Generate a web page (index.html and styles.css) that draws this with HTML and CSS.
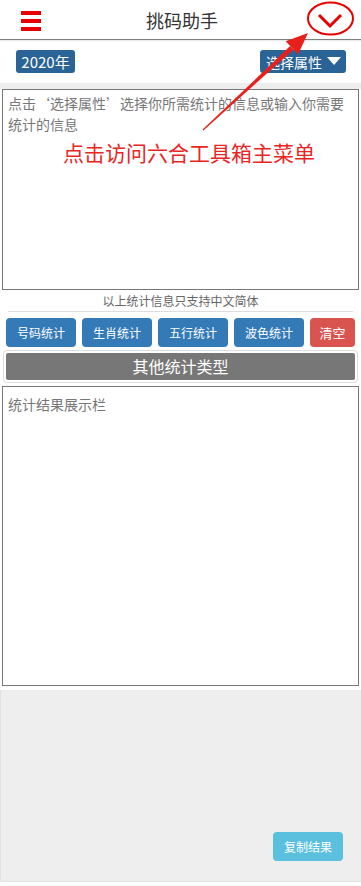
FILE: index.html
```html
<!DOCTYPE html>
<html lang="zh-CN">
<head>
<meta charset="utf-8">
<title>挑码助手</title>
<link rel="stylesheet" href="styles.css">
</head>
<body>
<div class="page">
  <header class="header">
    <span class="menu-icon"><i></i><i></i><i></i></span>
    <h1 class="title">挑码助手</h1>
    <svg class="chevron" width="30" height="20" viewBox="0 0 30 20"><path d="M4 4 L15 15 L26 4" fill="none" stroke="#e60000" stroke-width="3"/></svg>
  </header>
  <div class="toolbar">
    <span class="pill pill-year">2020年</span>
    <span class="pill pill-select">选择属性 <svg width="14" height="9" viewBox="0 0 14 9"><path d="M0 0 L14 0 L7 8 Z" fill="#fff"/></svg></span>
  </div>
  <div class="band"></div>
  <div class="input-box">
    <p class="placeholder">点击‘选择属性’选择你所需统计的信息或输入你需要统计的信息</p>
    <p class="hint">点击访问六合工具箱主菜单</p>
  </div>
  <p class="note">以上统计信息只支持中文简体</p>
  <div class="btn-row">
    <button class="btn btn-blue">号码统计</button>
    <button class="btn btn-blue">生肖统计</button>
    <button class="btn btn-blue">五行统计</button>
    <button class="btn btn-blue">波色统计</button>
    <button class="btn btn-red">清空</button>
  </div>
  <div class="other-wrap"><div class="other">其他统计类型</div></div>
  <div class="result-box"><p class="placeholder">统计结果展示栏</p></div>
  <div class="footer">
    <button class="btn btn-copy">复制结果</button>
  </div>
  <svg class="annot" width="361" height="180" viewBox="0 0 361 180">
    <ellipse cx="330.5" cy="18.5" rx="22.5" ry="16" fill="none" stroke="#e60000" stroke-width="2"/>
    <polygon points="202.6,129.6 203.4,130.4 293.5,49.7 290.1,46.1" fill="#e8201c"/>
    <polygon points="308,33 298,54.5 285.7,41.3" fill="#e8201c"/>
  </svg>
</div>
</body>
</html>
```
FILE: styles.css
```css
* { box-sizing: border-box; }
html, body { margin: 0; padding: 0; background: #fff; }
body { font-family: "Noto Sans CJK SC", "Noto Sans", sans-serif; color: #333; }
.page { position: relative; width: 361px; height: 886px; }
.header {
  height: 40px;
  border-bottom: 1px solid #7d7d7d;
  display: flex;
  align-items: center;
  justify-content: space-between;
  padding: 0 16px 0 21px;
  box-shadow: 0 1px 1px rgba(0,0,0,0.08);
}
.menu-icon { display: flex; flex-direction: column; gap: 4px; width: 20px; margin-top: 3px; }
.menu-icon i { display: block; height: 4px; background: #e60000; }
.title { margin: 0; font-size: 18px; font-weight: normal; color: #333; line-height: 1; margin-left: 8px; }
.chevron { display: block; margin-top: 2px; }
.toolbar {
  height: 43px;
  display: flex;
  justify-content: space-between;
  align-items: flex-start;
  padding: 10px 15px 0 16px;
}
.pill {
  display: flex; align-items: center; gap: 5px;
  height: 23px;
  padding: 0 5px;
  background: #2a6496;
  color: #fff;
  font-size: 14px;
  border-radius: 3px;
  line-height: 1;
}
.pill-year { font-size: 15px; width: 59px; justify-content: center; padding: 0; }
.pill-select { padding: 0 5px 0 6px; }
.band { height: 6px; background: #ededed; }
.input-box {
  height: 201px;
  margin: 0 2px;
  border: 1px solid #777;
  padding: 3px 5px;
}
.placeholder { margin: 0; font-size: 14px; line-height: 21px; color: #777; }
.hint { margin: 5px 0 0 55px; font-size: 21px; color: #e8251f; line-height: 1.2; }
.note {
  margin: 0 8px;
  height: 22px;
  border-bottom: 1px solid #ddd;
  font-size: 12px;
  color: #666;
  text-align: center;
  line-height: 22px;
}
.btn-row { display: flex; gap: 6px; padding: 6px 6px 0 6px; }
.btn {
  border: 0;
  border-radius: 4px;
  color: #fff;
  font-family: inherit;
  font-size: 12px;
  height: 29px;
  padding: 0;
}
.btn-blue { background: #337ab7; width: 70px; }
.btn-red { background: #d9534f; width: 45px; font-size: 13px; }
.other-wrap {
  margin: 3px 3px 0 3px;
  border: 1px solid #ddd;
  border-radius: 4px;
  padding: 2px;
}
.other {
  height: 27px;
  background: #777;
  color: #fff;
  font-size: 16px;
  text-align: center;
  line-height: 27px;
  border-radius: 2px;
}
.result-box {
  height: 300px;
  margin: 3px 2px 0 2px;
  border: 1px solid #777;
  padding: 7px 5px;
}
.footer {
  margin-top: 4px;
  height: 192px;
  background: #eeeeee;
  border-left: 1px solid #e2e2e2;
  border-bottom: 1px solid #e2e2e2;
  display: flex;
  justify-content: flex-end;
  align-items: flex-end;
  padding: 0 18px 20px 0;
}
.btn-copy { background: #5bc0de; width: 70px; }
.annot { position: absolute; left: 0; top: 0; pointer-events: none; }
```
